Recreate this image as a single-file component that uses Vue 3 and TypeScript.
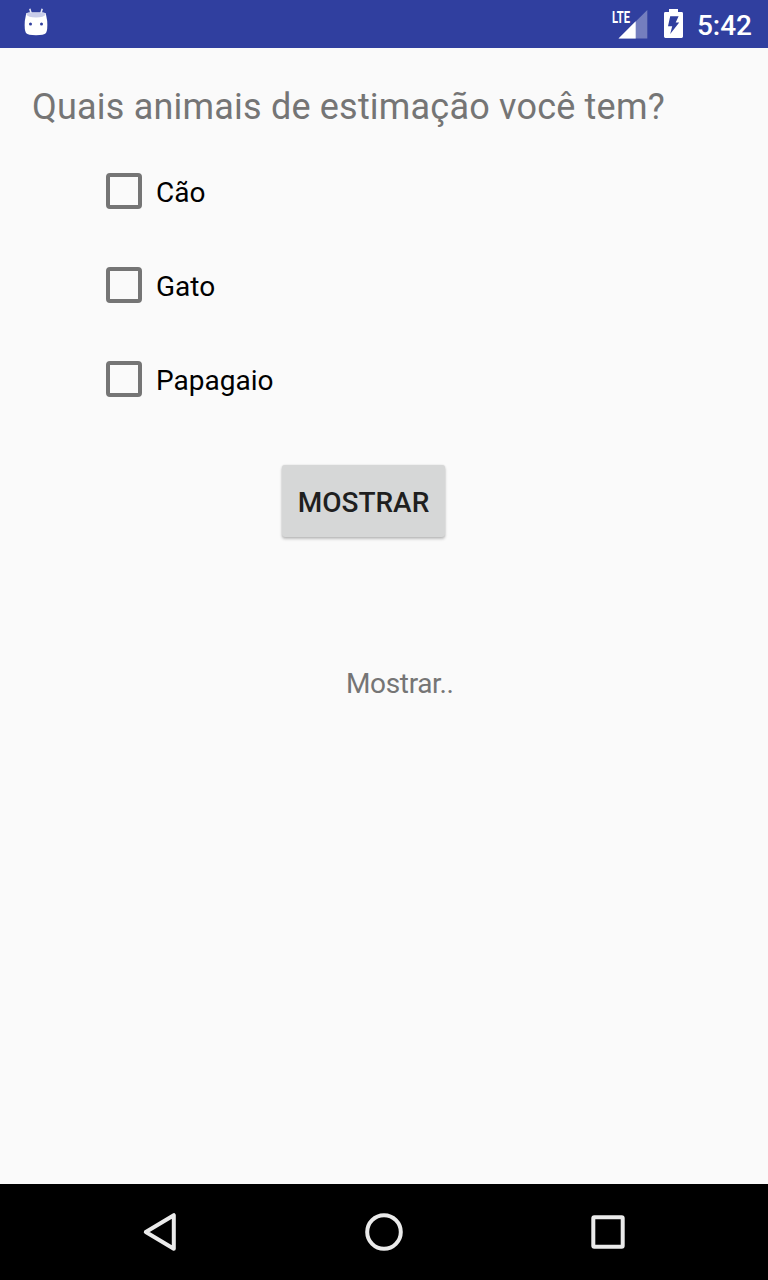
<script setup lang="ts">
import { ref } from 'vue'

interface Pet {
  label: string
  checked: boolean
}

const question = 'Quais animais de estimação você tem?'
const pets = ref<Pet[]>([
  { label: 'Cão', checked: false },
  { label: 'Gato', checked: false },
  { label: 'Papagaio', checked: false },
])
const result = ref('Mostrar..')

function show(): void {
  const chosen = pets.value.filter((p) => p.checked).map((p) => p.label)
  result.value = chosen.length ? chosen.join(', ') : 'Mostrar..'
}
</script>

<template>
  <div class="screen">
    <header class="status">
      <svg class="robot" width="24" height="28" viewBox="0 0 24 28">
        <path d="M5.8 .8L7.3 6M18.2 .8L16.7 6" stroke="#e4e6f4" stroke-width="1.6" fill="none" />
        <path d="M2 6.5Q2 4.6 5 4.6H19Q22 4.6 22 6.5L23.2 13Q23.8 22 22 25Q20 27.2 12 27.2Q4 27.2 2 25Q.2 22 .8 13Z" fill="#fff" />
        <path d="M2.3 6.6Q3 4.6 6 4.6H18Q21 4.6 21.7 6.6Q20 9.6 12 9.6Q4 9.6 2.3 6.6Z" fill="#c9cdea" />
        <circle cx="6.5" cy="16" r="1.5" fill="#303f9f" />
        <circle cx="17.5" cy="16" r="1.5" fill="#303f9f" />
      </svg>
      <div class="indicators">
        <svg class="signal" width="37" height="31" viewBox="0 0 37 31">
          <path d="M35.3 2V30.5H6.5Z" fill="#fff" fill-opacity=".33" />
          <path d="M23.7 13.3V30.5H6.5Z" fill="#fff" />
          <text class="lte" x="0" y="14.6" textLength="18" lengthAdjust="spacingAndGlyphs">LTE</text>
        </svg>
        <svg class="battery" width="19" height="29" viewBox="0 0 19 29">
          <path d="M5 0H14V3H17.6Q19 3 19 4.4V27.6Q19 29 17.6 29H1.4Q0 29 0 27.6V4.4Q0 3 1.4 3H5Z" fill="#fff" />
          <path d="M6.2 7.2H14.6L11.7 13.6H15.2L6.2 25L8.2 17.2H4Z" fill="#303f9f" />
        </svg>
        <span class="clock">5:42</span>
      </div>
    </header>

    <main class="content">
      <h1 class="question">{{ question }}</h1>
      <div class="options">
        <label v-for="pet in pets" :key="pet.label" class="option">
          <input v-model="pet.checked" type="checkbox" class="box" />
          <span class="name">{{ pet.label }}</span>
        </label>
      </div>
      <button class="show" type="button" @click="show">MOSTRAR</button>
      <p class="result">{{ result }}</p>
    </main>

    <nav class="navbar">
      <svg class="nav-icon" width="48" height="48" viewBox="0 0 48 48">
        <path d="M37.8 7.2V40.8L9.8 24Z" />
      </svg>
      <svg class="nav-icon" width="48" height="48" viewBox="0 0 48 48">
        <circle cx="24" cy="24" r="16.8" />
      </svg>
      <svg class="nav-icon" width="48" height="48" viewBox="0 0 48 48">
        <rect x="9.3" y="9.3" width="29.4" height="29.4" rx="1" />
      </svg>
    </nav>
  </div>
</template>

<style>
body {
  margin: 0;
}
</style>

<style scoped>
.screen {
  display: flex;
  flex-direction: column;
  width: 768px;
  height: 1280px;
  overflow: hidden;
  background: #fafafa;
  font-family: Roboto, 'Liberation Sans', sans-serif;
}

.status {
  display: flex;
  justify-content: space-between;
  flex: none;
  height: 48px;
  box-sizing: border-box;
  padding: 8px 16px 0 24px;
  background: #303f9f;
}

.indicators {
  display: flex;
}

.signal {
  overflow: visible;
}

.battery {
  margin: 1px 14px 0 15px;
}

.lte {
  font-family: Roboto, sans-serif;
  font-size: 17px;
  font-weight: 700;
  fill: #fff;
}

.clock {
  color: #fff;
  font-size: 28px;
  font-weight: 500;
  line-height: 36px;
}

.content {
  display: flex;
  flex-direction: column;
  align-items: flex-start;
  flex: 1;
  padding: 38px 32px 0;
}

.question {
  margin: 0;
  color: #757575;
  font-size: 36px;
  font-weight: 400;
  letter-spacing: 0.2px;
  line-height: 42px;
  white-space: nowrap;
}

.options {
  display: flex;
  flex-direction: column;
  gap: 30px;
  margin: 31px 0 0 74px;
}

.option {
  display: flex;
  align-items: center;
  gap: 14px;
  height: 64px;
  color: #000;
  font-size: 28px;
}

.box {
  appearance: none;
  width: 36px;
  height: 36px;
  margin: 0;
  box-sizing: border-box;
  border: 4px solid #757575;
  border-radius: 4px;
}

.box:checked {
  background: #ff4081;
  border-color: #ff4081;
}

.name {
  padding-top: 4px;
  line-height: 34px;
}

.show {
  width: 163px;
  height: 72px;
  margin: 54px 0 0 250px;
  padding: 3px 0 0;
  border: 0;
  border-radius: 3px;
  background: #d6d7d7;
  box-shadow: 0 2px 3px rgba(0, 0, 0, 0.24), 0 0 2px rgba(0, 0, 0, 0.12);
  color: #1f1f1f;
  font-family: inherit;
  font-size: 28px;
  font-weight: 500;
  white-space: nowrap;
}

.result {
  margin: 130px 0 0 314px;
  color: #757575;
  font-size: 28px;
  letter-spacing: -0.35px;
  line-height: 33px;
}

.navbar {
  display: flex;
  flex: none;
  align-items: center;
  justify-content: center;
  gap: 176px;
  height: 96px;
  background: #000;
}

.nav-icon {
  fill: none;
  stroke: #ebebeb;
  stroke-width: 4;
  stroke-linejoin: round;
}
</style>
